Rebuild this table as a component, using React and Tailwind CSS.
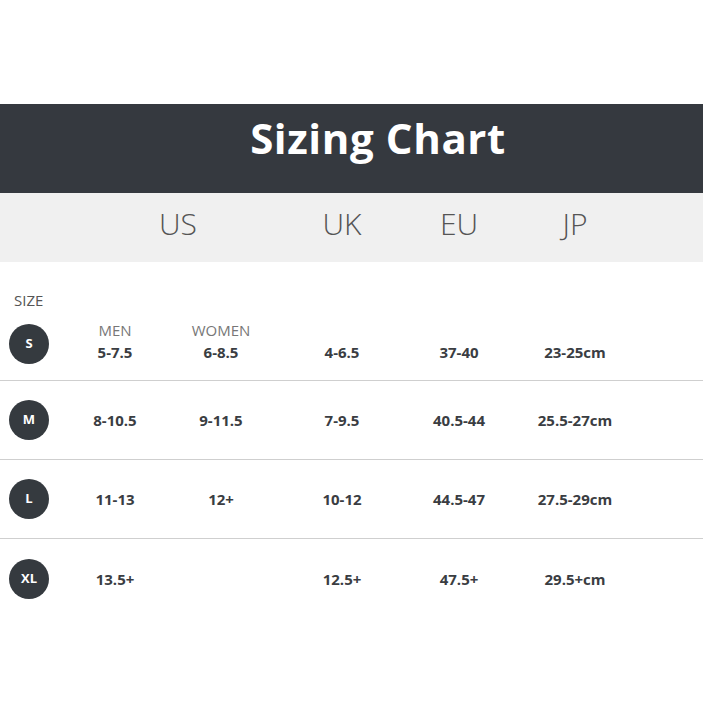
import React from 'react';

const font = { fontFamily: '"Open Sans", "Liberation Sans", sans-serif' };

const rows = [
    { size: 'S', men: '5-7.5', women: '6-8.5', uk: '4-6.5', eu: '37-40', jp: '23-25cm' },
    { size: 'M', men: '8-10.5', women: '9-11.5', uk: '7-9.5', eu: '40.5-44', jp: '25.5-27cm' },
    { size: 'L', men: '11-13', women: '12+', uk: '10-12', eu: '44.5-47', jp: '27.5-29cm' },
    { size: 'XL', men: '13.5+', women: '', uk: '12.5+', eu: '47.5+', jp: '29.5+cm' },
];

const cols = ['w-[114px]', 'w-[98px]', 'w-[144px]', 'w-[90px]', 'w-[142px]'];

const Badge = ({ label }) => (
    <div className="w-[40px] h-[40px] rounded-full bg-[#353a3f] flex items-center justify-center text-white text-[13px] font-bold shrink-0 ml-[9px] mr-[9px]">
        {label}
    </div>
);

const Value = ({ children, className }) => (
    <div className={`${className} text-center text-[15px] font-bold text-[#3a3d42] leading-[20px]`}>{children}</div>
);

export default function App() {
    return (
        <div className="w-[703px] h-[703px] bg-white overflow-hidden" style={font}>
            <div className="h-[104px]" />
            <div className="h-[89px] bg-[#35393f] flex items-center justify-center pl-[53px] pb-[22px]">
                <h1 className="text-white text-[42px] font-bold leading-none tracking-[0.6px]">Sizing Chart</h1>
            </div>
            <div className="h-[69px] bg-[#f0f0f0] flex items-center text-[30px] font-light text-[#555] leading-none pb-[8px]">
                <div className="w-[100px]" />
                <div className="w-[156px] text-center">US</div>
                <div className="w-[14px]" />
                <div className="w-[144px] text-center">UK</div>
                <div className="w-[90px] text-center">EU</div>
                <div className="w-[142px] text-center">JP</div>
            </div>

            <div className="border-b border-[#cfcfcf] pt-[28px] pb-[16px]">
                <div className="pl-[14px] text-[15px] text-[#555] leading-[20px]">SIZE</div>
                <div className="flex items-start mt-[14px]">
                    <Badge label="S" />
                    <div className={`${cols[0]} -mt-[4px] text-center`}>
                        <div className="text-[15px] text-[#777] leading-[20px]">MEN</div>
                        <div className="text-[15px] font-bold text-[#3a3d42] leading-[20px] mt-[2px]">{rows[0].men}</div>
                    </div>
                    <div className={`${cols[1]} -mt-[4px] text-center`}>
                        <div className="text-[15px] text-[#777] leading-[20px]">WOMEN</div>
                        <div className="text-[15px] font-bold text-[#3a3d42] leading-[20px] mt-[2px]">{rows[0].women}</div>
                    </div>
                    <Value className={`${cols[2]} mt-[18px]`}>{rows[0].uk}</Value>
                    <Value className={`${cols[3]} mt-[18px]`}>{rows[0].eu}</Value>
                    <Value className={`${cols[4]} mt-[18px]`}>{rows[0].jp}</Value>
                </div>
            </div>

            {rows.slice(1).map((r, i) => (
                <div key={r.size} className={`h-[79px] flex items-center ${i < 2 ? 'border-b border-[#cfcfcf]' : ''}`}>
                    <Badge label={r.size} />
                    <Value className={cols[0]}>{r.men}</Value>
                    <Value className={cols[1]}>{r.women}</Value>
                    <Value className={cols[2]}>{r.uk}</Value>
                    <Value className={cols[3]}>{r.eu}</Value>
                    <Value className={cols[4]}>{r.jp}</Value>
                </div>
            ))}
        </div>
    );
}
